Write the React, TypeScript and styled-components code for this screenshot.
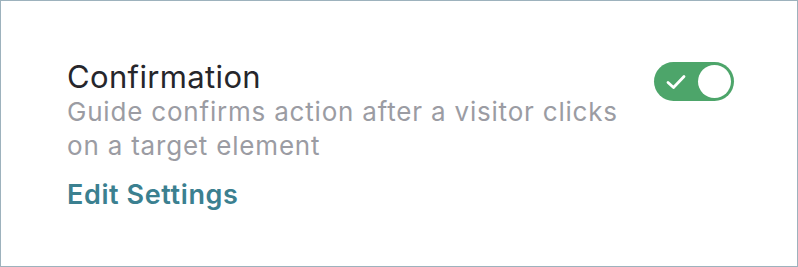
import styled, { createGlobalStyle } from "styled-components"

const GlobalStyle = createGlobalStyle`
  html, body {
    margin: 0;
    padding: 0;
    background: #ffffff;
    font-family: Inter, "Noto Sans", sans-serif;
  }
`

const Card = styled.div`
  box-sizing: border-box;
  width: 798px;
  height: 267px;
  border: 1px solid #9db2bd;
  background: #ffffff;
  padding: 58px 63px 0 66px;
  display: flex;
  justify-content: space-between;
  align-items: flex-start;
`

const TextBlock = styled.div`
  display: flex;
  flex-direction: column;
  width: 570px;
`

const Title = styled.div`
  font-size: 31px;
  line-height: 36px;
  letter-spacing: 0.35px;
  color: #26262b;
  font-weight: 400;
`

const Description = styled.div`
  font-size: 26px;
  line-height: 34px;
  letter-spacing: 0.8px;
  color: #9b9ca3;
  width: 565px;
`

const EditLink = styled.a`
  margin-top: 15px;
  font-size: 27px;
  line-height: 34px;
  letter-spacing: 0.6px;
  font-weight: 600;
  color: #3b8090;
  text-decoration: none;
  cursor: pointer;
`

const Toggle = styled.button<{ $on: boolean }>`
  box-sizing: border-box;
  margin-top: 3px;
  width: 80px;
  height: 39px;
  border: none;
  border-radius: 20px;
  padding: 0 3px 0 0;
  background: ${({ $on }) => ($on ? "#4da56a" : "#c9ccd1")};
  display: flex;
  align-items: center;
  justify-content: space-between;
  cursor: pointer;
`

const CheckWrap = styled.span`
  display: flex;
  align-items: center;
  justify-content: center;
  width: 22px;
  height: 18px;
  margin-left: 11px;
`

const Knob = styled.span`
  width: 33px;
  height: 33px;
  border-radius: 50%;
  background: #ffffff;
`

export default function App() {
  return (
    <>
      <GlobalStyle />
      <Card>
        <TextBlock>
          <Title>Confirmation</Title>
          <Description>
            Guide confirms action after a visitor clicks on a target element
          </Description>
          <EditLink>Edit Settings</EditLink>
        </TextBlock>
        <Toggle $on={true} aria-label="Toggle confirmation">
          <CheckWrap>
            <svg width="22" height="18" viewBox="0 0 22 18" fill="none">
              <path
                d="M3 9.5 L8.5 14.5 L19 3.5"
                stroke="#ffffff"
                strokeWidth="2.8"
                strokeLinecap="round"
                strokeLinejoin="round"
              />
            </svg>
          </CheckWrap>
          <Knob />
        </Toggle>
      </Card>
    </>
  )
}
